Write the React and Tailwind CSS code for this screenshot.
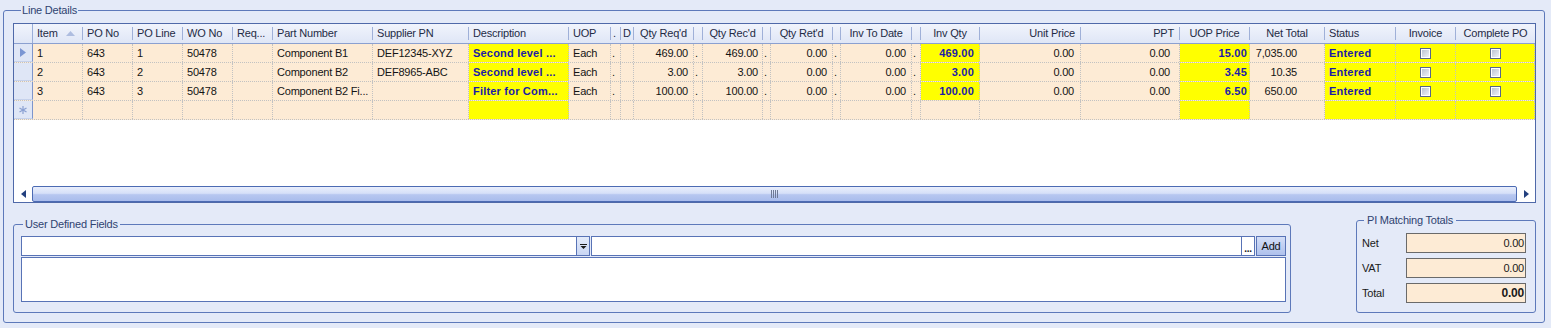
import React from "react";

const cols = [
  { k: "item", label: "Item", w: "w-[50px]", sort: true },
  { k: "po", label: "PO No", w: "w-[50px]" },
  { k: "line", label: "PO Line", w: "w-[50px]" },
  { k: "wo", label: "WO No", w: "w-[50px]" },
  { k: "req", label: "Req...", w: "w-[40px]" },
  { k: "part", label: "Part Number", w: "w-[100px]" },
  { k: "spn", label: "Supplier PN", w: "w-[96px]" },
  { k: "desc", label: "Description", w: "w-[100px]", hl: true, hlNew: true, blue: true },
  { k: "uop", label: "UOP", w: "w-[42px]" },
  { k: "n1", label: ".", w: "w-[10px]", narrow: true },
  { k: "d", label: "D", w: "w-[13px]", narrow: true },
  { k: "qreq", label: "Qty Req'd", w: "w-[60px]", num: "pr-[5px]", head: "c" },
  { k: "n2", label: "", w: "w-[9px]", narrow: true },
  { k: "qrec", label: "Qty Rec'd", w: "w-[60px]", num: "pr-[4px]", head: "c" },
  { k: "n3", label: "", w: "w-[8px]", narrow: true },
  { k: "qret", label: "Qty Ret'd", w: "w-[62px]", num: "pr-[5px]", head: "c" },
  { k: "n4", label: "", w: "w-[8px]", narrow: true },
  { k: "itd", label: "Inv To Date", w: "w-[71px]", num: "pr-[5px]", head: "c" },
  { k: "n5", label: "", w: "w-[9px]", narrow: true },
  { k: "iqty", label: "Inv Qty", w: "w-[59px]", num: "pr-[5px]", head: "c", hl: true, blue: true },
  { k: "unit", label: "Unit Price", w: "w-[101px]", num: "pr-[6px]", head: "r" },
  { k: "ppt", label: "PPT", w: "w-[99px]", num: "pr-[9px]", head: "r" },
  { k: "uopp", label: "UOP Price", w: "w-[70px]", num: "pr-[2px]", head: "c", hl: true, hlNew: true, blue: true },
  { k: "net", label: "Net Total", w: "w-[75px]", num: "pr-[27px]", head: "c" },
  { k: "status", label: "Status", w: "w-[71px]", hl: true, hlNew: true, blue: true },
  { k: "inv", label: "Invoice", w: "w-[60px]", head: "c", hl: true, hlNew: true, check: true },
  { k: "cpo", label: "Complete PO", w: "w-[79px]", head: "c", hl: true, hlNew: true, check: true },
];

const rows = [
  { item: "1", po: "643", line: "1", wo: "50478", part: "Component B1", spn: "DEF12345-XYZ", desc: "Second level ...", uop: "Each", n1: ".", qreq: "469.00", n2: ".", qrec: "469.00", n3: ".", qret: "0.00", n4: ".", itd: "0.00", n5: ".", iqty: "469.00", unit: "0.00", ppt: "0.00", uopp: "15.00", net: "7,035.00", status: "Entered" },
  { item: "2", po: "643", line: "2", wo: "50478", part: "Component B2", spn: "DEF8965-ABC", desc: "Second level ...", uop: "Each", n1: ".", qreq: "3.00", n2: ".", qrec: "3.00", n3: ".", qret: "0.00", n4: ".", itd: "0.00", n5: ".", iqty: "3.00", unit: "0.00", ppt: "0.00", uopp: "3.45", net: "10.35", status: "Entered" },
  { item: "3", po: "643", line: "3", wo: "50478", part: "Component B2 Fi...", spn: "", desc: "Filter for Com...", uop: "Each", n1: ".", qreq: "100.00", n2: ".", qrec: "100.00", n3: ".", qret: "0.00", n4: ".", itd: "0.00", n5: ".", iqty: "100.00", unit: "0.00", ppt: "0.00", uopp: "6.50", net: "650.00", status: "Entered" },
];

function Check() {
  return (
    <span className="block w-[11px] h-[11px] border border-[#58678a] bg-white p-px">
      <span className="block w-full h-full bg-linear-to-br from-[#bcc4d4] to-[#eef1f6]" />
    </span>
  );
}

function HeaderRow() {
  return (
    <div className="flex h-[20px] shrink-0 border-b border-[#8ba0d0] bg-linear-to-b from-[#f1f4fc] to-[#dfe6f6] text-[#1f2b45]">
      <div className="w-[19px] shrink-0 border-r border-[#9aaed9]" />
      {cols.map((c, i) => (
        <div key={c.k} className={`${c.w} shrink-0 flex items-center h-full`}>
          <div
            className={`flex-1 min-w-0 flex items-center overflow-hidden whitespace-nowrap ${
              c.narrow ? "pl-[2px]" : c.head === "c" ? "justify-center" : c.head === "r" ? "justify-end pr-[5px]" : "pl-[4px]"
            } ${c.sort ? "justify-between pr-[7px]" : ""}`}
          >
            <span>{c.label}</span>
            {c.sort && (
              <svg width="9" height="5" viewBox="0 0 9 5">
                <polygon points="0,5 4.5,0 9,5" fill="#aebde0" />
              </svg>
            )}
          </div>
          {i < cols.length - 1 && <span className="w-px h-[13px] shrink-0 bg-[#9fb0d8]" />}
        </div>
      ))}
    </div>
  );
}

function DataRow({ r, current, isNew }) {
  return (
    <div className="flex h-[19px] shrink-0 border-b border-dotted border-[#c2c2c2] bg-[#fdebd5]">
      <div className="w-[19px] shrink-0 flex items-center justify-center border-r border-[#7d95cc] bg-[#dfe6f6] border-b border-b-[#c6d2ec] border-solid">
        {current && (
          <svg width="6" height="9" viewBox="0 0 6 9">
            <polygon points="0,0 6,4.5 0,9" fill="#7b96d3" />
          </svg>
        )}
        {isNew && (
          <svg width="8" height="8" viewBox="0 0 8 8" stroke="#8aa0d2" strokeWidth="1.2">
            <line x1="4" y1="0" x2="4" y2="8" />
            <line x1="0.5" y1="2" x2="7.5" y2="6" />
            <line x1="0.5" y1="6" x2="7.5" y2="2" />
          </svg>
        )}
      </div>
      {cols.map((c) => {
        const yellow = isNew ? c.hlNew : c.hl;
        const v = r ? r[c.k] : "";
        return (
          <div
            key={c.k}
            className={`${c.w} shrink-0 h-full flex items-center overflow-hidden whitespace-nowrap border-r border-dotted border-[#c2c2c2] ${
              yellow ? "bg-[#ffff00]" : ""
            } ${c.blue ? "font-bold text-[#1c1ca6] tracking-[0.2px]" : "text-[#141414]"} ${
              c.check ? "justify-center" : c.narrow ? "pl-[1px]" : c.num ? `justify-end ${c.num}` : "pl-[4px]"
            }`}
          >
            {c.check ? (r ? <Check /> : null) : v}
          </div>
        );
      })}
    </div>
  );
}

function HScroll() {
  return (
    <div className="flex h-[16px] shrink-0 bg-white">
      <div className="w-[18px] shrink-0 flex items-center justify-center">
        <svg width="5" height="8" viewBox="0 0 5 8">
          <polygon points="5,0 0,4 5,8" fill="#23407f" />
        </svg>
      </div>
      <div className="flex-1 flex items-center justify-center rounded-[2px] border border-[#4c6bb3] bg-[linear-gradient(to_bottom,#e9eefc_0%,#d6e0f8_45%,#b7c7f0_55%,#a9bcec_100%)]">
        <div className="flex gap-px">
          <span className="w-px h-[8px] bg-[#6f7a96]" />
          <span className="w-px h-[8px] bg-[#6f7a96]" />
          <span className="w-px h-[8px] bg-[#6f7a96]" />
          <span className="w-px h-[8px] bg-[#6f7a96]" />
        </div>
      </div>
      <div className="w-[18px] shrink-0 flex items-center justify-center">
        <svg width="5" height="8" viewBox="0 0 5 8">
          <polygon points="0,0 5,4 0,8" fill="#23407f" />
        </svg>
      </div>
    </div>
  );
}

export default function App() {
  return (
    <div className="w-[1551px] h-[328px] overflow-hidden bg-[#e4eaf8] pt-[3px] pl-[3px] font-['Liberation_Sans',Arial,sans-serif] text-[11px] leading-[13px] tracking-[-0.2px]">
      <fieldset className="w-[1542px] h-[320px] border border-[#5d79ba] rounded-[3px] pl-[9px] pr-[8px] pt-[6px] pb-[9px] m-0">
        <legend className="ml-[8px] px-[1px] leading-[14px] text-[#2f4370]">Line Details</legend>

        <div className="flex flex-col h-[180px] w-[1523px] border border-[#4f69a9] bg-white">
          <HeaderRow />
          {rows.map((r, i) => (
            <DataRow key={i} r={r} current={i === 0} />
          ))}
          <DataRow r={null} isNew />
          <div className="flex-1" />
          <HScroll />
        </div>

        <div className="flex items-start justify-between w-[1523px]">
          <fieldset className="mt-[14px] w-[1278px] h-[96px] border border-[#5d79ba] rounded-[3px] pl-[7px] pr-[4px] pt-[5px] pb-[10px] m-0">
            <legend className="ml-[2px] px-[2px] leading-[14px] text-[#2f4370]">User Defined Fields</legend>
            <div className="flex h-[20px] w-[1265px]">
              <div className="flex w-[569px] shrink-0 border border-[#5873b6] bg-white">
                <div className="flex-1" />
                <div className="w-[13px] border-l border-[#5873b6] bg-linear-to-b from-[#e4ebfa] to-[#c9d6f4] flex items-center justify-center">
                  <svg width="7" height="5" viewBox="0 0 7 5">
                    <rect x="0" y="0" width="7" height="1" fill="#1a1a1a" />
                    <polygon points="0.5,2 6.5,2 3.5,5" fill="#1a1a1a" />
                  </svg>
                </div>
              </div>
              <div className="ml-px flex flex-1 border border-[#5873b6] bg-white">
                <div className="flex-1" />
                <div className="w-[13px] border-l border-[#5873b6] bg-white flex items-end justify-center pb-[3px] font-bold text-[10px] leading-[6px] text-[#1a1a1a]">
                  ...
                </div>
              </div>
              <button className="w-[30px] shrink-0 ml-px border border-[#5873b6] bg-linear-to-b from-[#d3def7] to-[#afc1ec] text-[#111] flex items-center justify-center">
                Add
              </button>
            </div>
            <div className="mt-px h-[45px] w-[1265px] border border-[#5873b6] bg-white" />
          </fieldset>

          <fieldset className="mt-[10px] w-[180px] h-[100px] border border-[#5d79ba] rounded-[3px] pl-[5px] pr-[9px] pt-[6px] pb-[9px] m-0">
            <legend className="ml-[2px] px-[3px] leading-[14px] text-[#2f4370]">PI Matching Totals</legend>
            <div className="grid grid-cols-[44px_120px] gap-y-[5px] text-[#1a1a1a]">
              {[
                ["Net", false],
                ["VAT", false],
                ["Total", true],
              ].map(([l, b]) => (
                <React.Fragment key={l}>
                  <div className="h-[20px] flex items-center">{l}</div>
                  <div className={`h-[20px] flex items-center justify-end pr-[1px] border border-[#6a6a6a] bg-[#fdebd5] ${b ? "font-bold text-[12px]" : ""}`}>
                    0.00
                  </div>
                </React.Fragment>
              ))}
            </div>
          </fieldset>
        </div>
      </fieldset>
    </div>
  );
}
